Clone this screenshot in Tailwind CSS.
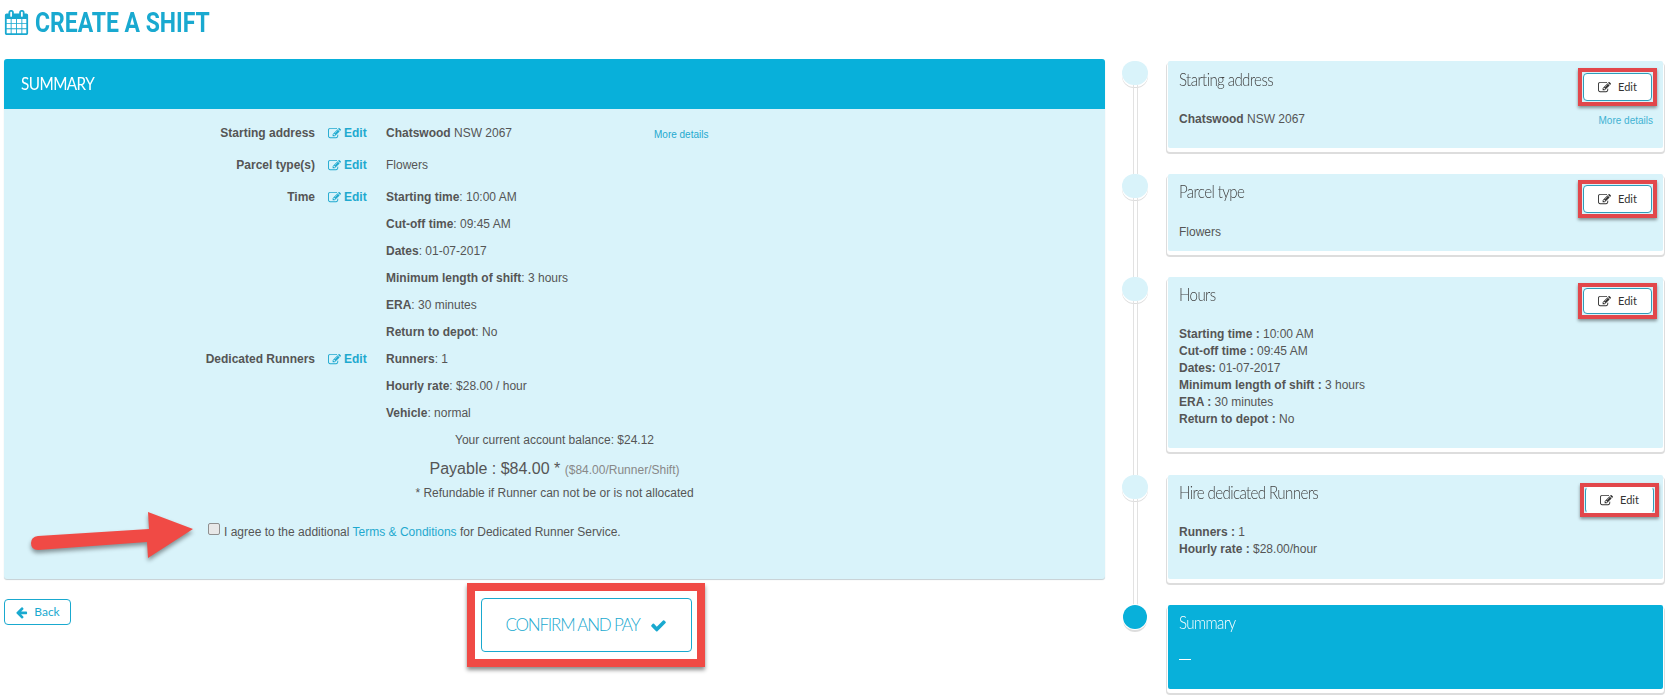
<!DOCTYPE html>
<html lang="en">
<head>
    <meta charset="UTF-8">
    <title>Create a shift</title>
    <script src="https://cdn.jsdelivr.net/npm/@tailwindcss/browser@4"></script>
</head>
<body class="bg-white font-['Liberation_Sans',Arial,sans-serif] text-[12px] text-[#555] overflow-hidden">
<svg class="hidden">
    <symbol id="icon-edit" viewBox="0 0 1792 1792"><path fill="currentColor" d="M888 1184l116-116-152-152-116 116v56h96v96h56zm440-720q-16-16-33 1l-350 350q-17 17-1 33t33-1l350-350q17-17 1-33zm80 594v190q0 119-84.5 203.5t-203.5 84.5h-832q-119 0-203.5-84.5t-84.5-203.5v-832q0-119 84.5-203.5t203.5-84.5h832q63 0 117 25 15 7 18 23 3 17-9 29l-49 49q-14 14-32 8-23-6-45-6h-832q-66 0-113 47t-47 113v832q0 66 47 113t113 47h832q66 0 113-47t47-113v-126q0-13 9-22l64-64q15-15 35-7t20 29zm-96-738l288 288-672 672h-288v-288zm444 132l-92 92-288-288 92-92q28-28 68-28t68 28l152 152q28 28 28 68t-28 68z"/></symbol>
</svg>
<div class="flex w-[1672px] h-[700px]">

    <!-- Left column -->
    <div class="w-[1105px] ml-1 shrink-0">
        <h1 class="h-[59px] flex items-start pt-[11px] gap-[6px] text-[#19a9d0]">
            <svg class="w-[25px] h-[25px] mt-[-1px]" viewBox="0 0 1792 1792" fill="currentColor"><path d="M192 1664h288v-288h-288v288zm352 0h320v-288h-320v288zm-352-352h288v-320h-288v320zm352 0h320v-320h-320v320zm-352-384h288v-288h-288v288zm736 736h320v-288h-320v288zm-384-736h320v-288h-320v288zm768 736h288v-288h-288v288zm-384-352h320v-320h-320v320zm-352-864v-288q0-13-9.5-22.5t-22.5-9.5h-64q-13 0-22.5 9.5t-9.5 22.5v288q0 13 9.5 22.5t22.5 9.5h64q13 0 22.5-9.5t9.5-22.5zm736 864h288v-320h-288v320zm-384-384h320v-288h-320v288zm384 0h288v-288h-288v288zm32-480v-288q0-13-9.5-22.5t-22.5-9.5h-64q-13 0-22.5 9.5t-9.5 22.5v288q0 13 9.5 22.5t22.5 9.5h64q13 0 22.5-9.5t9.5-22.5zm384-64v1280q0 52-38 90t-90 38h-1408q-52 0-90-38t-38-90v-1280q0-52 38-90t90-38h128v-96q0-66 47-113t113-47h64q66 0 113 47t47 113v96h384v-96q0-66 47-113t113-47h64q66 0 113 47t47 113v96h128q52 0 90 38t38 90z"/></svg>
            <span class="inline-block origin-left scale-x-[0.82] font-['Roboto',sans-serif] font-bold text-[28px] leading-[24px]">CREATE A SHIFT</span>
        </h1>

        <!-- Summary panel -->
        <section class="relative w-[1101px] h-[520px] rounded-[3px] bg-[#d9f3fa] shadow-[0_1px_1px_#c5cfd3]">
            <div class="h-[50px] rounded-t-[3px] bg-[#08b0da] flex items-center pl-[17px] text-white">
                <span class="inline-block origin-left scale-x-[0.9] font-['Lato',sans-serif] text-[17px] tracking-[-0.6px]">SUMMARY</span>
            </div>

            <div class="grid grid-cols-[311px_45px_1fr] gap-x-[13px] pt-[11px] leading-[27px]">
                <div class="text-right font-bold">Starting address</div>
                <a class="h-[27px] flex items-center gap-[3px] text-[#1fa9cf] font-bold"><svg class="w-[13px] h-[13px]"><use href="#icon-edit"/></svg>Edit</a>
                <div class="flex"><span class="w-[268px]"><b>Chatswood</b> NSW 2067</span><a class="text-[10px] text-[#1fa9cf] mt-[1px]">More details</a></div>

                <div class="mt-[4px] text-right font-bold">Parcel type(s)</div>
                <a class="mt-[4px] h-[27px] flex items-center gap-[3px] text-[#1fa9cf] font-bold"><svg class="w-[13px] h-[13px]"><use href="#icon-edit"/></svg>Edit</a>
                <div class="mt-[4px]">Flowers</div>

                <div class="mt-[5px] text-right font-bold">Time</div>
                <a class="mt-[5px] h-[27px] flex items-center gap-[3px] text-[#1fa9cf] font-bold"><svg class="w-[13px] h-[13px]"><use href="#icon-edit"/></svg>Edit</a>
                <div class="mt-[5px]">
                    <p><b>Starting time</b>: 10:00 AM</p>
                    <p><b>Cut-off time</b>: 09:45 AM</p>
                    <p><b>Dates</b>: 01-07-2017</p>
                    <p><b>Minimum length of shift</b>: 3 hours</p>
                    <p><b>ERA</b>: 30 minutes</p>
                    <p><b>Return to depot</b>: No</p>
                </div>

                <div class="text-right font-bold">Dedicated Runners</div>
                <a class="h-[27px] flex items-center gap-[3px] text-[#1fa9cf] font-bold"><svg class="w-[13px] h-[13px]"><use href="#icon-edit"/></svg>Edit</a>
                <div>
                    <p><b>Runners</b>: 1</p>
                    <p><b>Hourly rate</b>: $28.00 / hour</p>
                    <p><b>Vehicle</b>: normal</p>
                </div>
            </div>

            <div class="text-center">
                <p class="leading-[27px]">Your current account balance: $24.12</p>
                <p class="leading-[29px] text-[16px]">Payable : $84.00 * <span class="text-[12px] text-[#888]">($84.00/Runner/Shift)</span></p>
                <p class="leading-[16px]">* Refundable if Runner can not be or is not allocated</p>
            </div>

            <label class="flex items-center mt-[22px] ml-[204px] leading-[18px]">
                <span class="w-[12px] h-[12px] mr-[4px] mt-[-6px] rounded-[2px] border border-[#8f8f8f] bg-[#e8e8e8]"></span>
                <span>I agree to the additional <a class="text-[#1fa9cf]">Terms &amp; Conditions</a> for Dedicated Runner Service.</span>
            </label>

            <!-- annotation arrow -->
            <svg class="absolute left-[24px] top-[449px] drop-shadow-[0_3px_2px_rgba(0,0,0,0.4)]" width="172" height="56" viewBox="0 0 172 56">
                <path d="M10 28 L121 21 L120 4 L165 21 L120 50 L119 34 L10 42 Q3 42 3 35 Q3 29 10 28 Z" fill="#f04a45"/>
            </svg>
        </section>

        <!-- Footer buttons -->
        <div class="flex items-start mt-[4px]">
            <button class="mt-[16px] w-[67px] h-[26px] flex items-center justify-center gap-[6px] rounded-[4px] border border-[#19a9cf] text-[#19a9cf] font-['Lato',sans-serif] text-[12px]">
                <svg class="w-[13px] h-[13px]" viewBox="0 0 1792 1792" fill="currentColor"><path d="M1664 896v128q0 53-32.5 90.5t-84.5 37.5h-704l293 294q38 36 38 90t-38 90l-75 76q-37 37-90 37-52 0-91-37l-651-652q-37-37-37-90 0-52 37-91l651-650q38-38 91-38 52 0 90 38l75 74q38 38 38 91t-38 91l-293 293h704q52 0 84.5 37.5t32.5 90.5z"/></svg>Back
            </button>
            <div class="ml-[396px] w-[238px] h-[84px] flex items-center justify-center border-[8px] border-[#f04a45] shadow-[0_3px_4px_rgba(0,0,0,0.45)]">
                <button class="w-[211px] h-[54px] flex items-center justify-center gap-[10px] rounded-[4px] border border-[#19a9cf] text-[#19a9cf] font-['Lato',sans-serif] font-light text-[17px] tracking-[-1.2px]">
                    CONFIRM AND PAY
                    <svg class="w-[17px] h-[17px]" viewBox="0 0 1792 1792" fill="currentColor"><path d="M1671 566q0 40-28 68l-724 724-136 136q-28 28-68 28t-68-28l-136-136-362-362q-28-28-28-68t28-68l136-136q28-28 68-28t68 28l294 295 656-657q28-28 68-28t68 28l136 136q28 28 28 68z"/></svg>
                </button>
            </div>
        </div>
    </div>

    <!-- Timeline -->
    <div class="ml-[1px] w-[553px] pt-[61px]">

        <div class="flex h-[113px]">
            <div class="w-[50px] mr-[8px] flex flex-col items-center shrink-0">
                <span class="w-[26px] h-[24px] shrink-0 rounded-full bg-[#d9f3fa] shadow-[0_2px_0_#fff,0_3px_0_#ddd]"></span>
                <span class="w-[5px] grow border-x border-[#e2e2e2]"></span>
            </div>
            <div class="w-[495px] h-[87px] flex justify-between pl-[11px] pr-[6px] pt-[7px] rounded-[2px] bg-[#d9f3fa] shadow-[0_3px_0_1px_#fff,0_4px_0_2px_#ddd]">
                <div>
                    <h3 class="origin-left scale-x-[0.89] font-['Lato',sans-serif] font-light text-[17px] tracking-[-0.7px] leading-[24px] text-[#444]">Starting address</h3>
                    <p class="mt-[19px] leading-[17px]"><b>Chatswood</b> NSW 2067</p>
                </div>
                <div class="flex flex-col items-end">
                    <div class="p-[1px] border-[4px] border-[#e2474b] shadow-[0_2px_3px_rgba(0,0,0,0.4)]">
                        <button class="w-[69px] h-[28px] flex items-center justify-center gap-[7px] rounded-[4px] border border-[#2e9db9] bg-white font-['Lato',sans-serif] text-[11px] text-[#333]"><svg class="w-[13px] h-[13px]"><use href="#icon-edit"/></svg>Edit</button>
                    </div>
                    <a class="mt-[7px] mr-[4px] text-[10px] text-[#3fb2d3]">More details</a>
                </div>
            </div>
        </div>

        <div class="flex h-[103px]">
            <div class="w-[50px] mr-[8px] flex flex-col items-center shrink-0">
                <span class="w-[26px] h-[24px] shrink-0 rounded-full bg-[#d9f3fa] shadow-[0_2px_0_#fff,0_3px_0_#ddd]"></span>
                <span class="w-[5px] grow border-x border-[#e2e2e2]"></span>
            </div>
            <div class="w-[495px] h-[77px] flex justify-between pl-[11px] pr-[6px] pt-[6px] rounded-[2px] bg-[#d9f3fa] shadow-[0_3px_0_1px_#fff,0_4px_0_2px_#ddd]">
                <div>
                    <h3 class="origin-left scale-x-[0.89] font-['Lato',sans-serif] font-light text-[17px] tracking-[-0.7px] leading-[24px] text-[#444]">Parcel type</h3>
                    <p class="mt-[20px] leading-[17px]">Flowers</p>
                </div>
                <div class="self-start p-[1px] border-[4px] border-[#e2474b] shadow-[0_2px_3px_rgba(0,0,0,0.4)]">
                    <button class="w-[69px] h-[28px] flex items-center justify-center gap-[7px] rounded-[4px] border border-[#2e9db9] bg-white font-['Lato',sans-serif] text-[11px] text-[#333]"><svg class="w-[13px] h-[13px]"><use href="#icon-edit"/></svg>Edit</button>
                </div>
            </div>
        </div>

        <div class="flex h-[198px]">
            <div class="w-[50px] mr-[8px] flex flex-col items-center shrink-0">
                <span class="w-[26px] h-[24px] shrink-0 rounded-full bg-[#d9f3fa] shadow-[0_2px_0_#fff,0_3px_0_#ddd]"></span>
                <span class="w-[5px] grow border-x border-[#e2e2e2]"></span>
            </div>
            <div class="w-[495px] h-[171px] flex justify-between pl-[11px] pr-[6px] pt-[6px] rounded-[2px] bg-[#d9f3fa] shadow-[0_3px_0_1px_#fff,0_4px_0_2px_#ddd]">
                <div>
                    <h3 class="origin-left scale-x-[0.89] font-['Lato',sans-serif] font-light text-[17px] tracking-[-0.7px] leading-[24px] text-[#444]">Hours</h3>
                    <div class="mt-[19px] leading-[17px]">
                        <p><b>Starting time :</b> 10:00 AM</p>
                        <p><b>Cut-off time :</b> 09:45 AM</p>
                        <p><b>Dates:</b> 01-07-2017</p>
                        <p><b>Minimum length of shift :</b> 3 hours</p>
                        <p><b>ERA :</b> 30 minutes</p>
                        <p><b>Return to depot :</b> No</p>
                    </div>
                </div>
                <div class="self-start p-[1px] border-[4px] border-[#e2474b] shadow-[0_2px_3px_rgba(0,0,0,0.4)]">
                    <button class="w-[69px] h-[26px] flex items-center justify-center gap-[7px] rounded-[4px] border border-[#2e9db9] bg-white font-['Lato',sans-serif] text-[11px] text-[#333]"><svg class="w-[13px] h-[13px]"><use href="#icon-edit"/></svg>Edit</button>
                </div>
            </div>
        </div>

        <div class="flex h-[130px]">
            <div class="w-[50px] mr-[8px] flex flex-col items-center shrink-0">
                <span class="w-[26px] h-[24px] shrink-0 rounded-full bg-[#d9f3fa] shadow-[0_2px_0_#fff,0_3px_0_#ddd]"></span>
                <span class="w-[5px] grow border-x border-[#e2e2e2]"></span>
            </div>
            <div class="w-[495px] h-[104px] flex justify-between pl-[11px] pr-[4px] pt-[6px] rounded-[2px] bg-[#d9f3fa] shadow-[0_3px_0_1px_#fff,0_4px_0_2px_#ddd]">
                <div>
                    <h3 class="origin-left scale-x-[0.89] font-['Lato',sans-serif] font-light text-[17px] tracking-[-0.7px] leading-[24px] text-[#444]">Hire dedicated Runners</h3>
                    <div class="mt-[19px] leading-[17px]">
                        <p><b>Runners :</b> 1</p>
                        <p><b>Hourly rate :</b> $28.00/hour</p>
                    </div>
                </div>
                <div class="self-start mt-[2px] px-[1px] border-[4px] border-[#e2474b] shadow-[0_2px_3px_rgba(0,0,0,0.4)]">
                    <button class="w-[69px] h-[26px] flex items-center justify-center gap-[7px] rounded-[4px] border border-y-transparent border-x-[#2e9db9] bg-white font-['Lato',sans-serif] text-[11px] text-[#333]"><svg class="w-[13px] h-[13px]"><use href="#icon-edit"/></svg>Edit</button>
                </div>
            </div>
        </div>

        <div class="flex">
            <div class="w-[50px] mr-[8px] flex flex-col items-center shrink-0">
                <span class="w-[24px] h-[24px] shrink-0 rounded-full bg-[#08b0da] shadow-[0_0_0_1px_#fff,0_3px_0_#ddd]"></span>
            </div>
            <div class="w-[495px] h-[84px] pl-[11px] pt-[6px] rounded-[2px] bg-[#08b0da] text-white shadow-[0_3px_0_1px_#fff,0_4px_0_2px_#ddd]">
                <h3 class="origin-left scale-x-[0.89] font-['Lato',sans-serif] font-light text-[17px] tracking-[-0.7px] leading-[24px]">Summary</h3>
                <div class="mt-[24px] w-[12px] h-[1px] bg-white"></div>
            </div>
        </div>
    </div>
</div>
</body>
</html>
